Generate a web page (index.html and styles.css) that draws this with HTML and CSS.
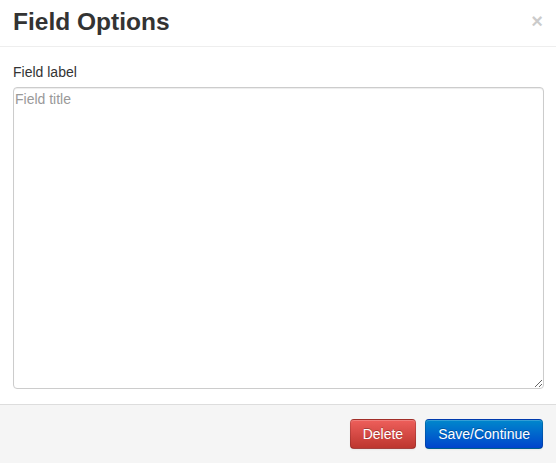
FILE: index.html
```html
<!DOCTYPE html>
<html lang="en">
<head>
    <meta charset="UTF-8">
    <meta name="viewport" content="width=device-width, initial-scale=1.0">
    <title>Field Options</title>
    <link rel="stylesheet" href="styles.css">
</head>
<body>
    <div class="modal">
        <div class="modal-header">
            <h3>Field Options</h3>
            <button class="close" type="button">&times;</button>
        </div>

        <div class="modal-body">
            <label for="field-title">Field label</label>
            <textarea id="field-title" placeholder="Field title"></textarea>
        </div>

        <div class="modal-footer">
            <button class="btn btn-danger" type="button">Delete</button>
            <button class="btn btn-primary" type="button">Save/Continue</button>
        </div>
    </div>
</body>
</html>
```

FILE: styles.css
```css
body {
    font-family: "Liberation Sans", Arial, sans-serif;
    font-size: 14px;
    line-height: 20px;
    color: #333;
    background-color: #fff;
    margin: 0;
}

.modal {
    display: flex;
    flex-direction: column;
    min-height: 463px;
}

.modal-header {
    display: flex;
    justify-content: space-between;
    align-items: flex-start;
    padding: 7px 13px 9px 13px;
    border-bottom: 1px solid #eee;
}

.modal-header h3 {
    margin: 0;
    font-size: 24.5px;
    line-height: 30px;
    font-weight: bold;
    color: #333;
}

.close {
    background: none;
    border: none;
    padding: 0;
    margin-top: 4px;
    font-family: "Liberation Sans", Arial, sans-serif;
    font-size: 20px;
    font-weight: bold;
    line-height: 20px;
    color: #000;
    opacity: 0.2;
    cursor: pointer;
}

.modal-body {
    display: flex;
    flex-direction: column;
    padding: 15px 12px 15px 13px;
}

.modal-body label {
    margin-bottom: 5px;
}

.modal-body textarea {
    height: 302px;
    box-sizing: border-box;
    padding: 1px 1px;
    font-family: "Liberation Sans", Arial, sans-serif;
    font-size: 14px;
    line-height: 20px;
    color: #555;
    border: 1px solid #ccc;
    border-radius: 4px;
    box-shadow: inset 0 1px 1px rgba(0, 0, 0, 0.075);
    outline: none;
}

.modal-body textarea::placeholder {
    color: #999;
}

.modal-footer {
    flex-grow: 1;
    display: flex;
    justify-content: flex-end;
    align-items: flex-start;
    gap: 9px;
    padding: 14px 13px 14px 15px;
    background-color: #f5f5f5;
    border-top: 1px solid #ddd;
}

.btn {
    font-family: "Liberation Sans", Arial, sans-serif;
    font-size: 14px;
    line-height: 20px;
    padding: 4px 12px;
    color: #fff;
    border: 1px solid rgba(0, 0, 0, 0.15);
    border-bottom-color: rgba(0, 0, 0, 0.3);
    border-radius: 4px;
    text-shadow: 0 -1px 0 rgba(0, 0, 0, 0.25);
    box-shadow: inset 0 1px 0 rgba(255, 255, 255, 0.2), 0 1px 2px rgba(0, 0, 0, 0.05);
    cursor: pointer;
}

.btn-danger {
    background: linear-gradient(to bottom, #ee5f5b, #bd362f);
}

.btn-primary {
    background: linear-gradient(to bottom, #0088cc, #0044cc);
}
```
